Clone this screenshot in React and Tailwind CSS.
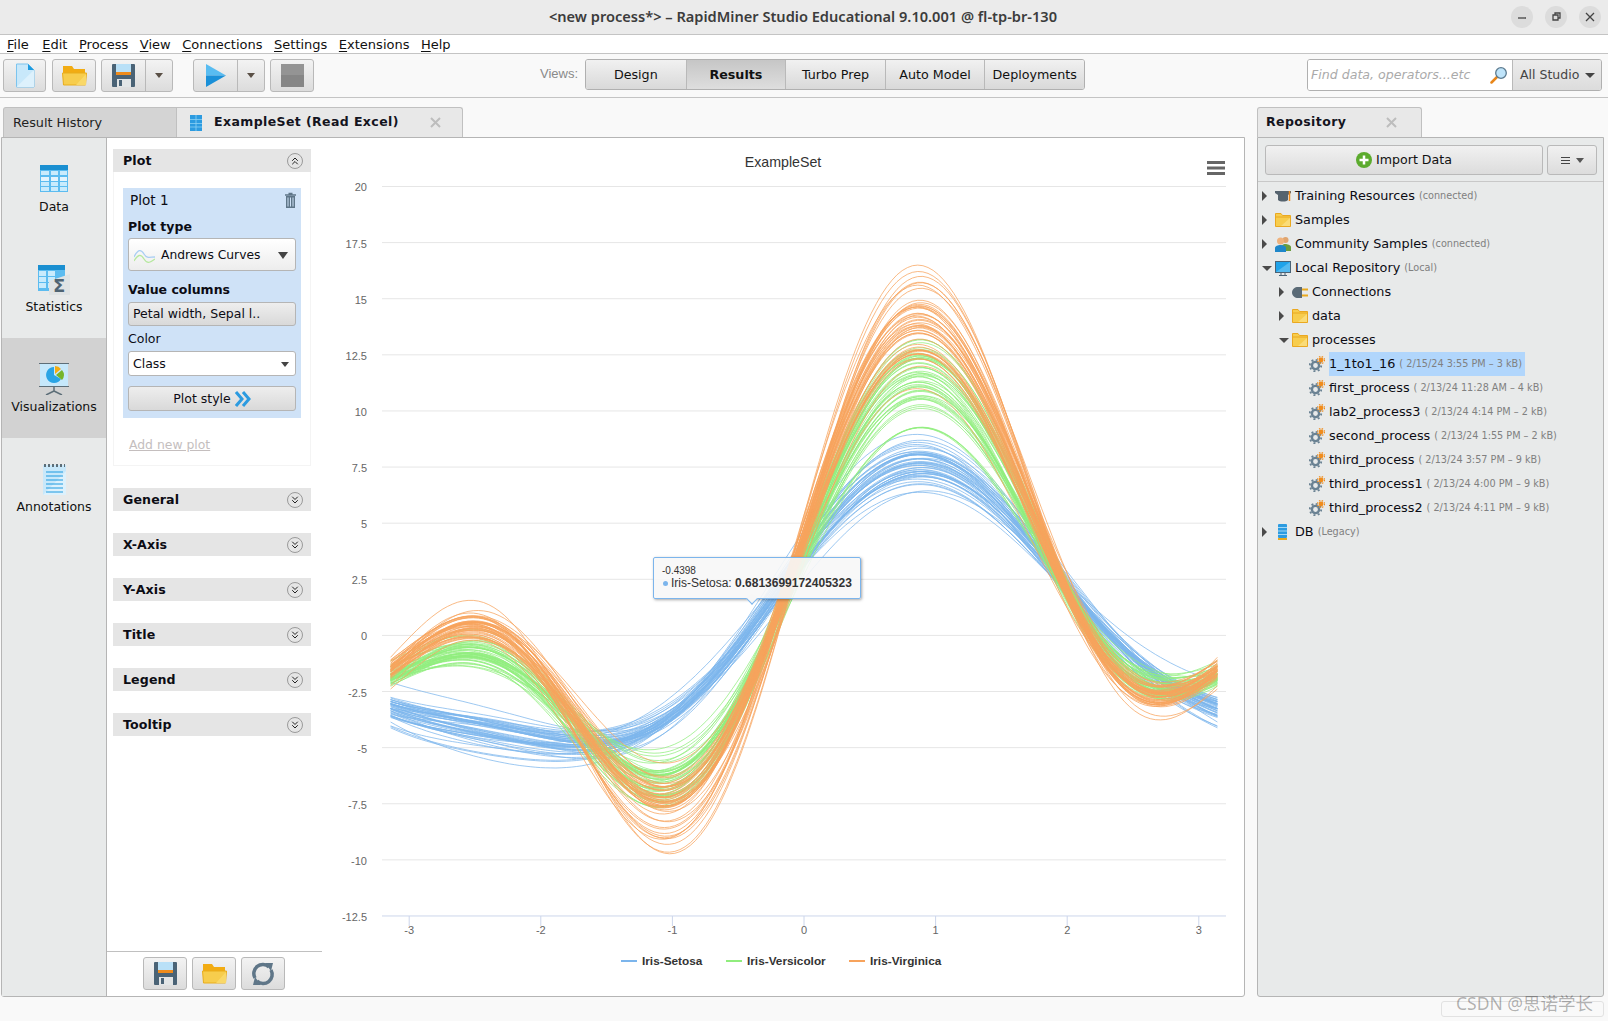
import { ChevronsDown, ChevronsUp } from 'lucide-react';

const iris = {
  setosa: '5.1,3.5,1.4,.2 4.9,3,1.4,.2 4.7,3.2,1.3,.2 4.6,3.1,1.5,.2 5,3.6,1.4,.2 5.4,3.9,1.7,.4 4.6,3.4,1.4,.3 5,3.4,1.5,.2 4.4,2.9,1.4,.2 4.9,3.1,1.5,.1 5.4,3.7,1.5,.2 4.8,3.4,1.6,.2 4.8,3,1.4,.1 4.3,3,1.1,.1 5.8,4,1.2,.2 5.7,4.4,1.5,.4 5.4,3.9,1.3,.4 5.1,3.5,1.4,.3 5.7,3.8,1.7,.3 5.1,3.8,1.5,.3 5.4,3.4,1.7,.2 5.1,3.7,1.5,.4 4.6,3.6,1,.2 5.1,3.3,1.7,.5 4.8,3.4,1.9,.2 5,3,1.6,.2 5,3.4,1.6,.4 5.2,3.5,1.5,.2 5.2,3.4,1.4,.2 4.7,3.2,1.6,.2 4.8,3.1,1.6,.2 5.4,3.4,1.5,.4 5.2,4.1,1.5,.1 5.5,4.2,1.4,.2 4.9,3.1,1.5,.1 5,3.2,1.2,.2 5.5,3.5,1.3,.2 4.9,3.1,1.5,.1 4.4,3,1.3,.2 5.1,3.4,1.5,.2 5,3.5,1.3,.3 4.5,2.3,1.3,.3 4.4,3.2,1.3,.2 5,3.5,1.6,.6 5.1,3.8,1.9,.4 4.8,3,1.4,.3 5.1,3.8,1.6,.2 4.6,3.2,1.4,.2 5.3,3.7,1.5,.2 5,3.3,1.4,.2',
  versicolor: '7,3.2,4.7,1.4 6.4,3.2,4.5,1.5 6.9,3.1,4.9,1.5 5.5,2.3,4,1.3 6.5,2.8,4.6,1.5 5.7,2.8,4.5,1.3 6.3,3.3,4.7,1.6 4.9,2.4,3.3,1 6.6,2.9,4.6,1.3 5.2,2.7,3.9,1.4 5,2,3.5,1 5.9,3,4.2,1.5 6,2.2,4,1 6.1,2.9,4.7,1.4 5.6,2.9,3.6,1.3 6.7,3.1,4.4,1.4 5.6,3,4.5,1.5 5.8,2.7,4.1,1 6.2,2.2,4.5,1.5 5.6,2.5,3.9,1.1 5.9,3.2,4.8,1.8 6.1,2.8,4,1.3 6.3,2.5,4.9,1.5 6.1,2.8,4.7,1.2 6.4,2.9,4.3,1.3 6.6,3,4.4,1.4 6.8,2.8,4.8,1.4 6.7,3,5,1.7 6,2.9,4.5,1.5 5.7,2.6,3.5,1 5.5,2.4,3.8,1.1 5.5,2.4,3.7,1 5.8,2.7,3.9,1.2 6,2.7,5.1,1.6 5.4,3,4.5,1.5 6,3.4,4.5,1.6 6.7,3.1,4.7,1.5 6.3,2.3,4.4,1.3 5.6,3,4.1,1.3 5.5,2.5,4,1.3 5.5,2.6,4.4,1.2 6.1,3,4.6,1.4 5.8,2.6,4,1.2 5,2.3,3.3,1 5.6,2.7,4.2,1.3 5.7,3,4.2,1.2 5.7,2.9,4.2,1.3 6.2,2.9,4.3,1.3 5.1,2.5,3,1.1 5.7,2.8,4.1,1.3',
  virginica: '6.3,3.3,6,2.5 5.8,2.7,5.1,1.9 7.1,3,5.9,2.1 6.3,2.9,5.6,1.8 6.5,3,5.8,2.2 7.6,3,6.6,2.1 4.9,2.5,4.5,1.7 7.3,2.9,6.3,1.8 6.7,2.5,5.8,1.8 7.2,3.6,6.1,2.5 6.5,3.2,5.1,2 6.4,2.7,5.3,1.9 6.8,3,5.5,2.1 5.7,2.5,5,2 5.8,2.8,5.1,2.4 6.4,3.2,5.3,2.3 6.5,3,5.5,1.8 7.7,3.8,6.7,2.2 7.7,2.6,6.9,2.3 6,2.2,5,1.5 6.9,3.2,5.7,2.3 5.6,2.8,4.9,2 7.7,2.8,6.7,2 6.3,2.7,4.9,1.8 6.7,3.3,5.7,2.1 7.2,3.2,6,1.8 6.2,2.8,4.8,1.8 6.1,3,4.9,1.8 6.4,2.8,5.6,2.1 7.2,3,5.8,1.6 7.4,2.8,6.1,1.9 7.9,3.8,6.4,2 6.4,2.8,5.6,2.2 6.3,2.8,5.1,1.5 6.1,2.6,5.6,1.4 7.7,3,6.1,2.3 6.3,3.4,5.6,2.4 6.4,3.1,5.5,1.8 6,3,4.8,1.8 6.9,3.1,5.4,2.1 6.7,3.1,5.6,2.4 6.9,3.1,5.1,2.3 5.8,2.7,5.1,1.9 6.8,3.2,5.9,2.3 6.7,3.3,5.7,2.5 6.7,3,5.2,2.3 6.3,2.5,5,1.9 6.5,3,5.2,2 6.2,3.4,5.4,2.3 5.9,3,5.1,1.8',
};

const toX = (t) => 804 + t * 131.6;
const toY = (v) => 635.4 - v * 22.446;

// Andrews curve: petal width, sepal length, sepal width, petal length
const curves = (rows) =>
  rows.split(' ').map((row) => {
    const [sl, sw, pl, pw] = row.split(',').map(Number);
    let d = '';
    for (let i = 0; i <= 160; i++) {
      const t = -Math.PI + (i / 160) * 2 * Math.PI;
      const v = pw / Math.SQRT2 + sl * Math.sin(t) + sw * Math.cos(t) + pl * Math.sin(2 * t);
      d += `${i ? 'L' : 'M'}${toX(t).toFixed(1)} ${toY(v).toFixed(1)}`;
    }
    return d;
  });

const series = [
  { color: '#7cb5ec', paths: curves(iris.setosa) },
  { color: '#90ed7d', paths: curves(iris.versicolor) },
  { color: '#f7a35c', paths: curves(iris.virginica) },
];

const yTicks = [20, 17.5, 15, 12.5, 10, 7.5, 5, 2.5, 0, -2.5, -5, -7.5, -10, -12.5];
const xTicks = [-3, -2, -1, 0, 1, 2, 3];

const Caret = ({ className = 'border-t-[#5a5046]' }) => (
  <span className={`w-0 h-0 border-x-[4px] border-x-transparent border-t-[5px] ${className}`} />
);

const Close = ({ className = '' }) => (
  <svg width="11" height="11" viewBox="0 0 11 11" className={className}>
    <path d="M1 1L10 10M10 1L1 10" stroke="#bdbdbd" strokeWidth="2" />
  </svg>
);

const NewFileIcon = () => (
  <svg width="20" height="25" viewBox="0 0 20 25">
    <path d="M1.5 1H13L19 7V24H1.5Z" fill="#c8e8fa" stroke="#7cc4ee" />
    <path d="M1.5 24L19 7V24Z" fill="#ddf1fc" />
    <path d="M13 1L19 7H13Z" fill="#1e9be0" />
  </svg>
);

const FolderIcon = () => (
  <svg width="25" height="21" viewBox="0 0 25 21">
    <path d="M1 1H10L12 4H23V10H1Z" fill="#f2ac13" />
    <path d="M0.5 8H24.5L23.5 20H1.5Z" fill="#f7cd4d" stroke="#e9ad1c" />
    <path d="M14 20L24 9V20Z" fill="#f9d868" />
  </svg>
);

const SaveIcon = () => (
  <svg width="23" height="23" viewBox="0 0 23 23">
    <rect width="23" height="23" rx="1" fill="#4a6376" />
    <rect x="4" y="0" width="15" height="8" fill="#b9e0f7" />
    <rect x="4" y="8" width="15" height="3" fill="#ee8b1c" />
    <rect x="5" y="15" width="14" height="8" fill="#e2e5e6" />
    <rect x="7" y="16" width="3" height="6" fill="#4a6376" />
  </svg>
);

const ToolButton = ({ className = 'w-[43px]', children }) => (
  <div
    className={`h-[33px] flex items-center justify-center border border-[#b9b9b9] rounded-[3px] bg-gradient-to-b from-[#f3f3f3] to-[#dcdcdc] ${className}`}
  >
    {children}
  </div>
);

const SplitButton = ({ className, children }) => (
  <div
    className={`h-[33px] w-[72px] flex border border-[#b9b9b9] rounded-[3px] bg-gradient-to-b from-[#f3f3f3] to-[#dcdcdc] ${className}`}
  >
    <div className="w-[44px] flex items-center justify-center border-r border-[#b9b9b9]">{children}</div>
    <div className="flex-1 flex items-center justify-center">
      <Caret />
    </div>
  </div>
);

const TableIcon = () => (
  <svg width="28" height="27" viewBox="0 0 28 27" className="mb-[3px]">
    <rect width="28" height="27" fill="#5cbcf0" />
    <rect y="0" width="28" height="5" fill="#1a8fd1" />
    {[6, 12, 17, 22].map((y) =>
      [1, 11, 20].map((x) => (
        <rect key={`${x}-${y}`} x={x} y={y} width={x === 1 ? 8 : 7} height="4" fill={y === 12 ? '#e4f4fd' : '#c9ebfc'} />
      ))
    )}
  </svg>
);

const StatsIcon = () => (
  <svg width="32" height="30" viewBox="0 0 32 30">
    <rect width="27" height="26" fill="#5cbcf0" />
    <rect width="27" height="5" fill="#1a8fd1" />
    {[6, 12, 18].map((y) =>
      [1, 10].map((x) => <rect key={`${x}-${y}`} x={x} y={y} width="7" height="5" fill="#c9ebfc" />)
    )}
    <path d="M11 30V16L32 9V30Z" fill="#dfe3e4" />
    <text x="15" y="27" fontSize="18" fontWeight="700" fill="#4f6473" fontFamily="DejaVu Sans">
      Σ
    </text>
  </svg>
);

const VizIcon = () => (
  <svg width="30" height="32" viewBox="0 0 30 32">
    <rect x="1" y="1" width="28" height="22" fill="#c6e8fb" />
    <path d="M0 .5H30M0 23.5H30" stroke="#5d6e78" />
    <path d="M15 12L15 4A8 8 0 1 0 22 16Z" fill="#29a4e5" />
    <path d="M16 11V3A8 8 0 0 1 22 6Z" fill="#f2ac13" />
    <path d="M17 12L23 7A8 8 0 0 1 23 17Z" fill="#76b52a" />
    <path d="M15 24V28M15 28L7 32M15 28L23 32" stroke="#5d6e78" strokeWidth="1.5" />
  </svg>
);

const NotesIcon = () => (
  <svg width="23" height="32" viewBox="0 0 23 32">
    <rect y="2" width="23" height="30" fill="#c8e8fa" />
    <path d="M0 32L23 8V32Z" fill="#ddf1fc" />
    <path d="M1 2.5H22" stroke="#5d6e78" strokeWidth="3" strokeDasharray="2 2" />
    {[9, 13, 17, 21, 25, 29].map((y) => (
      <path key={y} d={`M3 ${y}H20`} stroke="#1d9ae0" strokeWidth="1" />
    ))}
  </svg>
);

const RailItem = ({ label, active, children }) => (
  <div className={`h-[100px] flex flex-col items-center ${active ? 'bg-[#d2d2d2]' : ''}`}>
    <div className="h-[58px] flex items-end pb-[1px]">{children}</div>
    <span className="text-[12.5px] leading-[20px] mt-[1px] text-[#111]">{label}</span>
  </div>
);

const SectionHeader = ({ title, open }) => {
  const Chevrons = open ? ChevronsUp : ChevronsDown;
  return (
    <div className="h-[23px] flex items-center justify-between bg-[#e5e5e5] pl-[10px] pr-[8px]">
      <span className="mt-[1px] text-[12.6px] font-bold tracking-[0.1px] text-[#0c0c14]">{title}</span>
      <span className="w-[16px] h-[16px] rounded-full border border-[#9a9a9a] flex items-center justify-center">
        <Chevrons size={12} strokeWidth={2} color="#222" />
      </span>
    </div>
  );
};

const Gear = () => (
  <svg width="16" height="16" viewBox="0 0 16 16" className="shrink-0">
    <circle cx="6.5" cy="9.5" r="3.6" fill="none" stroke="#6a8293" strokeWidth="2.4" />
    <circle cx="6.5" cy="9.5" r="5.7" fill="none" stroke="#6a8293" strokeWidth="1.800" strokeDasharray="2 2.4" />
    <circle cx="12" cy="4" r="2.4" fill="#f08c1c" />
    <circle cx="12" cy="4" r="3.5" fill="none" stroke="#f08c1c" strokeWidth="1.2" strokeDasharray="1.4 1.4" />
  </svg>
);

const TreeFolder = () => (
  <svg width="16" height="14" viewBox="0 0 16 14" className="shrink-0">
    <path d="M.5 .5H6L7.500 2.500H15.500V13.500H.5Z" fill="#f7cd4d" stroke="#eaa820" />
    <path d="M.5 4H15.500" stroke="#eaa820" />
    <path d="M6 13L15 5V13Z" fill="#fadc78" />
  </svg>
);

const HatIcon = () => (
  <svg width="16" height="13" viewBox="0 0 16 13" className="shrink-0">
    <path d="M0 1H16V3L13 5V10C11 12 5 12 3 10V5L0 3Z" fill="#55636e" />
    <path d="M14.500 1V11" stroke="#ee8b1c" strokeWidth="1.500" />
  </svg>
);

const PeopleIcon = () => (
  <svg width="16" height="16" viewBox="0 0 16 16" className="shrink-0">
    <circle cx="10.500" cy="4" r="3" fill="#e0a56f" />
    <path d="M7 15V10C7 8.500 9 8 10.500 8S16 9 16 11V15Z" fill="#6b9c3c" />
    <circle cx="5.500" cy="5" r="3.500" fill="#efb27c" />
    <path d="M0 16V12C0 10 3 9 5.500 9S11 10 11 12V16Z" fill="#1f87c9" />
  </svg>
);

const MonitorIcon = () => (
  <svg width="16" height="15" viewBox="0 0 16 15" className="shrink-0">
    <rect width="16" height="12" fill="#4a6376" />
    <rect x="1" y="1" width="14" height="10" fill="#1fa3ea" />
    <path d="M1 11L15 1V11Z" fill="#54baf0" />
    <path d="M6 12V14M4 14.500H12M10 12V14" stroke="#4a6376" />
  </svg>
);

const PlugIcon = () => (
  <svg width="16" height="13" viewBox="0 0 16 13" className="shrink-0">
    <path d="M0 6.500C0 3 3 1 6 1H10V12H6C3 12 0 10 0 6.500Z" fill="#5a6a76" />
    <path d="M10 3.500H16M10 9.500H16" stroke="#e9a91e" strokeWidth="2" />
  </svg>
);

const DbIcon = () => (
  <svg width="16" height="16" viewBox="0 0 16 16" className="shrink-0">
    <rect x="3" y="0" width="9" height="14" rx="1" fill="#2c9be0" />
    <path d="M3 3.500H12M3 7H12M3 10.500H12" stroke="#bfe6fb" strokeWidth=".8" />
    <rect x="3" y="14" width="9" height="2" fill="#e9a91e" />
  </svg>
);

const Triangle = ({ open }) =>
  open ? (
    <span className="w-0 h-0 border-x-[5px] border-x-transparent border-t-[5px] border-t-[#4a4a4a]" />
  ) : (
    <span className="w-0 h-0 border-y-[5px] border-y-transparent border-l-[5px] border-l-[#4a4a4a]" />
  );

const TreeRow = ({ level = 0, arrow, open, icon, name, meta, selected }) => (
  <div className="h-[24px] flex items-center" style={{ paddingLeft: 4 + level * 17 }}>
    <span className="w-[13px] flex shrink-0">{arrow && <Triangle open={open} />}</span>
    <span className="w-[16px] flex justify-center shrink-0">{icon}</span>
    <span className={`h-[24px] flex items-center ml-[4px] pr-[3px] ${selected ? 'bg-[#b1d6fc]' : ''}`}>
      <span className="text-[12.8px] text-[#0c0c14]">{name}</span>
      {meta && <span className="text-[9.7px] text-[#808080] ml-[4px]">{meta}</span>}
    </span>
  </div>
);

const processes = [
  ['1_1to1_16', '( 2/15/24 3:55 PM – 3 kB)'],
  ['first_process', '( 2/13/24 11:28 AM – 4 kB)'],
  ['lab2_process3', '( 2/13/24 4:14 PM – 2 kB)'],
  ['second_process', '( 2/13/24 1:55 PM – 2 kB)'],
  ['third_process', '( 2/13/24 3:57 PM – 9 kB)'],
  ['third_process1', '( 2/13/24 4:00 PM – 9 kB)'],
  ['third_process2', '( 2/13/24 4:11 PM – 9 kB)'],
];

const menus = ['File', 'Edit', 'Process', 'View', 'Connections', 'Settings', 'Extensions', 'Help'];
const views = ['Design', 'Results', 'Turbo Prep', 'Auto Model', 'Deployments'];

const Chart = () => (
  <div className="flex-1 relative">
    <svg width="922" height="857" viewBox="322 138 922 857" className="block [font-family:'Liberation_Sans',sans-serif]">
      <text x="783" y="167" textAnchor="middle" fontSize="14.2" fill="#333">
        ExampleSet
      </text>
      <path d="M1207 162.500H1225M1207 168H1225M1207 173.500H1225" stroke="#666" strokeWidth="3" />
      {yTicks.map((v) => (
        <g key={v}>
          <path d={`M382 ${toY(v)}H1226`} stroke={v === -12.5 ? '#ccd6eb' : '#e6e6e6'} />
          <text x="367" y={toY(v) + 5} textAnchor="end" fontSize="11" fill="#666">
            {v}
          </text>
        </g>
      ))}
      {xTicks.map((t) => (
        <g key={t}>
          <path d={`M${toX(t)} 916V926`} stroke="#ccd6eb" />
          <text x={toX(t)} y="934" textAnchor="middle" fontSize="11" fill="#666">
            {t}
          </text>
        </g>
      ))}
      {series.map((s) =>
        s.paths.map((d, i) => (
          <path key={`${s.color}-${i}`} d={d} fill="none" stroke={s.color} strokeWidth="1" strokeOpacity="0.75" />
        ))
      )}
      {[
        [621, 642, '#7cb5ec', 'Iris-Setosa'],
        [726, 747, '#90ed7d', 'Iris-Versicolor'],
        [849, 870, '#f7a35c', 'Iris-Virginica'],
      ].map(([x, tx, color, label]) => (
        <g key={label}>
          <path d={`M${x} 961H${x + 16}`} stroke={color} strokeWidth="2" />
          <text x={tx} y="964.500" fontSize="11.8" fontWeight="700" fill="#333">
            {label}
          </text>
        </g>
      ))}
    </svg>

    {/* Tooltip */}
    <div className="absolute left-[331px] top-[419px] w-[208px] h-[42px] border border-[#7cb5ec] rounded-[2px] bg-[#f7f7f7]/90 shadow-[1px_1px_3px_rgba(0,0,0,0.35)] pl-[8px] pt-[6px] [font-family:'Liberation_Sans',sans-serif] text-[#333]">
      <div className="text-[10px] leading-[13px]">-0.4398</div>
      <div className="flex items-center text-[12px] leading-[13px]">
        <span className="w-[5px] h-[5px] rounded-full bg-[#7cb5ec] mr-[3px] ml-[1px]" />
        Iris-Setosa:&nbsp;<b>0.6813699172405323</b>
      </div>
      <span className="absolute left-[94px] top-[37px] w-[8px] h-[8px] rotate-45 bg-[#f7f7f7] border-r border-b border-[#7cb5ec]" />
    </div>
  </div>
);

export default function App() {
  return (
    <div className="relative w-[1608px] h-[1021px] flex flex-col overflow-hidden bg-[#f9f9f9] text-[#111] [font-family:'DejaVu_Sans',sans-serif]">
      {/* Title bar */}
      <div className="h-[35px] grid grid-cols-[1fr_auto_1fr] items-center bg-[#ebebeb] border-b border-[#c4c4c4]">
        <div />
        <div className="[font-family:'Noto_Sans',sans-serif] font-semibold text-[14.6px] text-[#3c3c3c] -translate-x-[1px]">
          &lt;new process*&gt; – RapidMiner Studio Educational 9.10.001 @ fl-tp-br-130
        </div>
        <div className="flex justify-end gap-[12px] pr-[7px]">
          {['M7 12H15', 'M8 9H13V14H8ZM10 9V7H15V12H13', 'M7 7L15 15M15 7L7 15'].map((d) => (
            <span key={d} className="w-[22px] h-[22px] rounded-full bg-[#dcdcdc]">
              <svg width="22" height="22" viewBox="0 0 22 22">
                <path d={d} fill="none" stroke="#444" strokeWidth="1.300" />
              </svg>
            </span>
          ))}
        </div>
      </div>

      {/* Menu */}
      <div className="h-[19px] flex items-center gap-[11.5px] pl-[7px] pt-[1px] bg-white border-b border-[#c4c4c4] text-[13px]">
        {menus.map((m, i) => (
          <span key={m} className={i === 0 ? 'mr-[2px]' : ''}>
            <span className="underline underline-offset-2">{m[0]}</span>
            {m.slice(1)}
          </span>
        ))}
      </div>

      {/* Toolbar */}
      <div className="h-[44px] flex items-start pt-[5px] pl-[3px] pr-[6px] border-b border-[#c4c4c4]">
        <ToolButton>
          <NewFileIcon />
        </ToolButton>
        <ToolButton className="w-[44px] ml-[6px]">
          <FolderIcon />
        </ToolButton>
        <SplitButton className="ml-[5px]">
          <SaveIcon />
        </SplitButton>
        <SplitButton className="ml-[20px]">
          <svg width="20" height="23" viewBox="0 0 20 23">
            <path d="M0 0L20 11.500H0Z" fill="#58bcf1" />
            <path d="M0 23L20 11.500H0Z" fill="#1a90d8" />
          </svg>
        </SplitButton>
        <ToolButton className="w-[44px] ml-[5px] from-[#d6d6d6] to-[#cfcfcf]">
          <div className="w-[23px] h-[23px] bg-gradient-to-b from-[#949494] from-50% to-[#868686] to-50%" />
        </ToolButton>
        <span className="ml-[226px] w-[39px] h-[31px] leading-[30px] text-[13px] text-[#8a8a8a] [font-family:'Liberation_Sans',sans-serif]">Views:</span>
        <div className="ml-[6px] flex h-[31px] border border-[#b0b0b0] rounded-[3px] overflow-hidden">
          {views.map((v, i) => (
            <div
              key={v}
              className={`w-[99.6px] flex items-center justify-center text-[12.7px] border-[#b9b9b9] ${i ? 'border-l' : ''} ${
                v === 'Results'
                  ? 'font-bold bg-gradient-to-b from-[#c6c6c6] to-[#dedede]'
                  : 'bg-gradient-to-b from-[#f1f1f1] to-[#d9d9d9]'
              }`}
            >
              {v}
            </div>
          ))}
        </div>
        <div className="ml-auto flex h-[32px] border border-[#b0b0b0] rounded-[3px] overflow-hidden">
          <div className="w-[205px] bg-white flex items-center justify-between pl-[3px] pr-[4px] border-r border-[#b9b9b9]">
            <span className="italic text-[12.6px] text-[#aaaaaa]">Find data, operators...etc</span>
            <svg width="18" height="18" viewBox="0 0 18 18">
              <path d="M1.500 16.500L7 11" stroke="#e8861a" strokeWidth="2.500" strokeLinecap="round" />
              <circle cx="11" cy="7" r="5.300" fill="#bfe4fa" stroke="#5b7a90" strokeWidth="1.300" />
            </svg>
          </div>
          <div className="w-[88px] flex items-center justify-between pl-[7px] pr-[6px] text-[12.5px] text-[#444] bg-gradient-to-b from-[#ececec] to-[#dcdcdc]">
            All Studio
            <Caret className="border-x-[5px] border-t-[#444]" />
          </div>
        </div>
      </div>

      {/* Main */}
      <div className="flex-1 flex pt-[9px] pl-[1px]">
        <div className="w-[1244px] flex flex-col">
          <div className="h-[30px] flex pl-[2px]">
            <div className="w-[174px] flex items-center pl-[9px] bg-[#d4d4d4] border border-b-0 border-[#c0c0c0] rounded-tl-[3px] text-[12.8px] text-[#222]">
              Result History
            </div>
            <div className="w-[286px] flex items-center bg-[#e8e8e8] border border-l-0 border-b-0 border-[#c0c0c0] rounded-tr-[3px] pl-[13px] pr-[21px]">
              <svg width="12" height="16" viewBox="0 0 12 16">
                <rect width="12" height="16" fill="#2c9be0" />
                <path d="M0 4.500H12M0 8.500H12M0 12H12M6 0V16" stroke="#8ad0f5" strokeWidth=".8" />
              </svg>
              <span className="ml-[12px] text-[12.5px] font-bold tracking-[0.4px] text-[#14141e]">ExampleSet (Read Excel)</span>
              <Close className="ml-auto" />
            </div>
          </div>

          <div className="h-[860px] flex border border-[#b5b5b5] rounded-b-[3px] bg-white">
            {/* Views rail */}
            <div className="w-[105px] shrink-0 bg-[#e8eaea] border-r border-[#b5b5b5]">
              <RailItem label="Data">
                <TableIcon />
              </RailItem>
              <RailItem label="Statistics">
                <StatsIcon />
              </RailItem>
              <RailItem label="Visualizations" active>
                <VizIcon />
              </RailItem>
              <RailItem label="Annotations">
                <NotesIcon />
              </RailItem>
            </div>

            {/* Plot configuration */}
            <div className="w-[215px] shrink-0 flex flex-col">
              <div className="ml-[6px] w-[198px] mt-[11px] flex flex-col">
                <div className="shadow-[inset_1px_0_0_#f4f4f4,inset_-1px_-1px_0_#f4f4f4] h-[317px]">
                  <SectionHeader title="Plot" open />
                  <div className="ml-[10px] mt-[16px] w-[178px] h-[230px] bg-[#cfe2f7] px-[5px] text-[12.5px] text-[#0c0c14]">
                    <div className="h-[24px] flex items-center justify-between pl-[2px]">
                      <span className="text-[13.6px]">Plot 1</span>
                      <svg width="11" height="16" viewBox="0 0 11 16">
                        <path d="M3.500 1.500H7.500M0 3H11" stroke="#5f7688" strokeWidth="1.500" />
                        <path d="M1 4H10V16H1Z" fill="#5f7688" />
                        <path d="M3 5.500V14.500M5.500 5.500V14.500M8 5.500V14.500" stroke="#cfe2f7" />
                      </svg>
                    </div>
                    <div className="mt-[5px] h-[20px] leading-[20px] font-bold text-[12.5px]">Plot type</div>
                    <div className="mt-[1px] h-[33px] flex items-center pt-[2px] bg-gradient-to-b from-white to-[#ededed] border border-[#b5b5b5] rounded-[3px] pl-[5px] pr-[7px]">
                      <svg width="21" height="16" viewBox="0 0 21 16" fill="none">
                        <path d="M0 9C4 1 7 1 10 6S16 9 21 9" stroke="#a9cef3" strokeWidth="1.300" />
                        <path d="M0 13C4 6 7 6 10 11S16 15 21 11" stroke="#b6e89f" strokeWidth="1.300" />
                      </svg>
                      <span className="ml-[6px] text-[12.3px]">Andrews Curves</span>
                      <Caret className="ml-auto border-x-[5px] border-t-[7px] border-t-[#444]" />
                    </div>
                    <div className="mt-[9px] h-[20px] leading-[20px] font-bold text-[12.5px]">Value columns</div>
                    <div className="mt-[2px] h-[24px] flex items-center pl-[4px] bg-gradient-to-b from-[#eeeeee] to-[#d9d9d9] border border-[#b5b5b5] rounded-[3px]">
                      Petal width, Sepal l..
                    </div>
                    <div className="mt-[3px] h-[20px] leading-[20px]">Color</div>
                    <div className="mt-[2px] h-[25px] flex items-center justify-between pt-[1px] pl-[4px] pr-[6px] bg-white border border-[#b5b5b5] rounded-[3px]">
                      Class
                      <Caret className="border-t-[#444]" />
                    </div>
                    <div className="mt-[10px] h-[25px] flex items-center justify-center pt-[1px] gap-[4px] bg-gradient-to-b from-[#eeeeee] to-[#d9d9d9] border border-[#b5b5b5] rounded-[3px]">
                      Plot style
                      <svg width="16" height="16" viewBox="0 0 16 16" fill="none">
                        <path d="M1 1L7 8L1 15" stroke="#2c9be0" strokeWidth="3" />
                        <path d="M8 1L14 8L8 15" stroke="#2c9be0" strokeWidth="3" />
                      </svg>
                    </div>
                  </div>
                  <div className="mt-[17px] ml-[16px] text-[12.4px] leading-[20px] text-[#c4bebe] underline">Add new plot</div>
                </div>
                <div className="mt-[22px] flex flex-col gap-[22px]">
                  {['General', 'X-Axis', 'Y-Axis', 'Title', 'Legend', 'Tooltip'].map((t) => (
                    <SectionHeader key={t} title={t} />
                  ))}
                </div>
              </div>
              <div className="mt-auto h-[45px] border-t border-[#c0c0c0] flex items-start gap-[5px] pt-[5px] pl-[36px]">
                <ToolButton className="w-[44px] ml-0">
                  <SaveIcon />
                </ToolButton>
                <ToolButton className="w-[44px]">
                  <FolderIcon />
                </ToolButton>
                <ToolButton className="w-[44px]">
                  <svg width="24" height="24" viewBox="0 0 24 24" fill="none">
                    <path d="M4 16A9 9 0 0 1 18 5" stroke="#5f7688" strokeWidth="3.500" />
                    <path d="M20 8A9 9 0 0 1 6 19" stroke="#5f7688" strokeWidth="3.500" />
                    <path d="M14 1L22 1L20 9Z" fill="#5f7688" />
                    <path d="M10 23L2 23L4 15Z" fill="#5f7688" />
                  </svg>
                </ToolButton>
              </div>
            </div>

            <Chart />
          </div>
        </div>

        {/* Repository */}
        <div className="w-[347px] ml-[12px] flex flex-col">
          <div className="w-[165px] h-[30px] flex items-center justify-between pl-[8px] pr-[24px] bg-[#e8e8e8] border border-b-0 border-[#c0c0c0] rounded-t-[3px]">
            <span className="text-[12.5px] font-bold tracking-[0.4px] text-[#14141e]">Repository</span>
            <Close />
          </div>
          <div className="h-[860px] border border-[#b5b5b5] rounded-b-[3px] bg-[#e8eaea]">
            <div className="h-[44px] flex items-start gap-[4px] pt-[7px] pl-[7px] border-b border-[#c8c8c8]">
              <div className="w-[278px] h-[30px] flex items-center justify-center gap-[4px] text-[12.6px] border border-[#b9b9b9] rounded-[3px] bg-gradient-to-b from-[#f1f1f1] to-[#dcdcdc]">
                <svg width="16" height="16" viewBox="0 0 16 16">
                  <circle cx="8" cy="8" r="8" fill="#5cab2e" />
                  <path d="M8 3.500V12.500M3.500 8H12.500" stroke="#fff" strokeWidth="2.500" />
                </svg>
                Import Data
              </div>
              <div className="w-[50px] h-[30px] flex items-center justify-center gap-[6px] border border-[#b9b9b9] rounded-[3px] bg-gradient-to-b from-[#f1f1f1] to-[#dcdcdc]">
                <svg width="9" height="9" viewBox="0 0 9 9">
                  <path d="M0 1.500H9M0 4.500H9M0 7.500H9" stroke="#444" />
                </svg>
                <Caret className="border-t-[#555]" />
              </div>
            </div>
            <div className="pt-[2px]">
              <TreeRow arrow icon={<HatIcon />} name="Training Resources" meta="(connected)" />
              <TreeRow arrow icon={<TreeFolder />} name="Samples" />
              <TreeRow arrow icon={<PeopleIcon />} name="Community Samples" meta="(connected)" />
              <TreeRow arrow open icon={<MonitorIcon />} name="Local Repository" meta="(Local)" />
              <TreeRow level={1} arrow icon={<PlugIcon />} name="Connections" />
              <TreeRow level={1} arrow icon={<TreeFolder />} name="data" />
              <TreeRow level={1} arrow open icon={<TreeFolder />} name="processes" />
              {processes.map(([name, meta], i) => (
                <TreeRow key={name} level={2} icon={<Gear />} name={name} meta={meta} selected={i === 0} />
              ))}
              <TreeRow arrow icon={<DbIcon />} name="DB" meta="(Legacy)" />
            </div>
          </div>
        </div>
      </div>

      {/* Watermark */}
      <div className="absolute left-[1441px] top-[1001px] w-[163px] h-[16px] border border-[#e2e2e2] rounded-[3px]" />
      <div className="absolute left-[1456px] top-[991px] text-[17.5px] leading-[24px] text-[#000]/30 [font-family:'Noto_Sans','Noto_Sans_CJK_SC',sans-serif]">
        CSDN @思诺学长
      </div>
    </div>
  );
}
